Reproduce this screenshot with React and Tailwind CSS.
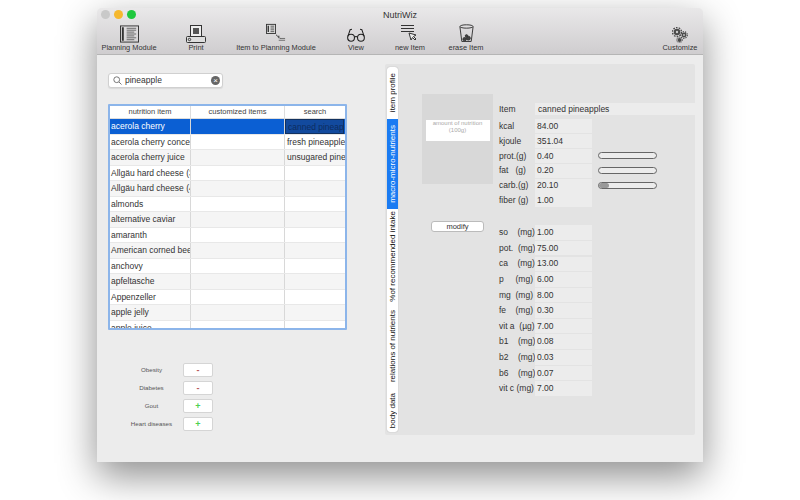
const rows = [
  ["acerola cherry", "canned pineapples"],
  ["acerola cherry concentrate", "fresh pineapple"],
  ["acerola cherry juice", "unsugared pineapple"],
  ["Allgäu hard cheese (30%)", ""],
  ["Allgäu hard cheese (45%)", ""],
  ["almonds", ""],
  ["alternative caviar", ""],
  ["amaranth", ""],
  ["American corned beef", ""],
  ["anchovy", ""],
  ["apfeltasche", ""],
  ["Appenzeller", ""],
  ["apple jelly", ""],
  ["apple juice", ""],
];

const conditions = [
  { label: "Obesity", sign: "-", color: "text-[#b85a5a]" },
  { label: "Diabetes", sign: "-", color: "text-[#b85a5a]" },
  { label: "Gout", sign: "+", color: "text-[#4fd14f]" },
  { label: "Heart diseases", sign: "+", color: "text-[#4fd14f]" },
];

const tabs = [
  { label: "item profile", height: "h-[52px]" },
  { label: "macro-micro-nutrients", height: "h-[90px]", active: true },
  { label: "%of recommended intake", height: "h-[94px]" },
  { label: "relations of nutrients", height: "h-[87px]" },
  { label: "body data", height: "h-[42px]" },
];

const basics = [
  { label: "kcal", value: "84.00" },
  { label: "kjoule", value: "351.04" },
  { label: "prot.(g)", value: "0.40", bar: "w-0" },
  { label: "fat   (g)", value: "0.20", bar: "w-0" },
  { label: "carb.(g)", value: "20.10", bar: "w-[10px]" },
  { label: "fiber (g)", value: "1.00" },
];

const minerals = [
  ["so    (mg)", "1.00"],
  ["pot.  (mg)", "75.00"],
  ["ca    (mg)", "13.00"],
  ["p     (mg)", "6.00"],
  ["mg  (mg)", "8.00"],
  ["fe    (mg)", "0.30"],
  ["vit a  (µg)", "7.00"],
  ["b1    (mg)", "0.08"],
  ["b2    (mg)", "0.03"],
  ["b6    (mg)", "0.07"],
  ["vit c (mg)", "7.00"],
];

const PlanningIcon = () => (
  <svg width="19" height="18" viewBox="0 0 20 18" fill="none" stroke="#333">
    <rect x="0.5" y="0.5" width="19" height="17" strokeWidth="1" />
    <path d="M3 2v14" strokeWidth="2" />
    <path d="M7 3h10M7 5h10M7 7h8M7 9h10M7 11h8M7 13h10M7 15h8" strokeWidth="1" stroke="#666" />
  </svg>
);

const PrintIcon = () => (
  <svg width="20" height="18" viewBox="0 0 20 18">
    <rect x="4.5" y="0.5" width="11" height="11" fill="#eee" stroke="#333" />
    <rect x="7" y="3" width="6" height="6" fill="#555" />
    <rect x="0.5" y="11.5" width="19" height="6" rx="1" fill="#ddd" stroke="#333" />
    <circle cx="3.5" cy="14.5" r="1.2" fill="none" stroke="#333" />
  </svg>
);

const ItemPlanningIcon = () => (
  <svg width="20" height="20" viewBox="0 0 22 20" fill="none" stroke="#333">
    <rect x="0.5" y="0.5" width="10" height="10" fill="#ddd" />
    <path d="M2.5 2v7" strokeWidth="1.5" />
    <path d="M5 2.500h4M5 4.500h4M5 6.500h4M5 8.500h4" stroke="#555" />
    <path d="M11 12l5 4" strokeDasharray="1.5 1" />
    <path d="M12 13l3 0-1 3z" fill="#555" stroke="none" />
    <path d="M14 18h7M15 16h6" stroke="#666" />
  </svg>
);

const GlassesIcon = () => (
  <svg width="18" height="15" viewBox="0 0 20 16" fill="none" stroke="#222" strokeWidth="1.2">
    <circle cx="4.5" cy="10.5" r="3.8" />
    <circle cx="15.5" cy="10.5" r="3.8" />
    <path d="M8.200 10c1-1 2.600-1 3.600 0M1 9l2.500-7.500L5.500 1M19 9L16.500 1.500 14.500 1" />
  </svg>
);

const NewItemIcon = () => (
  <svg width="20" height="19" viewBox="0 0 20 19" fill="none" stroke="#333">
    <path d="M1 1.500h13M1 4.500h13M1 7.500h13" />
    <path d="M9 9l2 7 1.500-2.500L15 16l1-1-2.500-2.500L16 11z" fill="#eee" />
  </svg>
);

const EraseIcon = () => (
  <svg width="15" height="19" viewBox="0 0 16 20" fill="none" stroke="#333">
    <ellipse cx="8" cy="2.500" rx="7" ry="1.800" />
    <path d="M1 3l2 15.500h10L15 3" />
    <circle cx="6" cy="16" r="1.800" fill="#444" />
    <circle cx="10" cy="15" r="2" fill="#444" />
    <circle cx="8" cy="12.500" r="1.300" fill="#444" />
  </svg>
);

const GearsIcon = () => (
  <svg width="16" height="16" viewBox="0 0 16 16" fill="#4a4a4a">
    <circle cx="5" cy="5" r="3.200" />
    <circle cx="5" cy="5" r="4.500" fill="none" stroke="#4a4a4a" strokeWidth="1.400" strokeDasharray="1.600 1.200" />
    <circle cx="5" cy="5" r="1.200" fill="#ccc" />
    <circle cx="12" cy="8" r="2.400" />
    <circle cx="12" cy="8" r="3.300" fill="none" stroke="#4a4a4a" strokeWidth="1.200" strokeDasharray="1.300 1" />
    <circle cx="12" cy="8" r="0.900" fill="#ccc" />
    <circle cx="7.500" cy="13" r="2" />
    <circle cx="7.500" cy="13" r="2.800" fill="none" stroke="#4a4a4a" strokeWidth="1" strokeDasharray="1.100 0.900" />
  </svg>
);

const ToolItem = ({ icon, label, className }) => (
  <div className={`flex flex-col items-center ${className}`}>
    <div className="flex h-[21px] items-end justify-center">{icon}</div>
    <span className="whitespace-nowrap text-[7.4px] leading-[10px] text-[#333]">{label}</span>
  </div>
);

const Meter = ({ bar }) => (
  <div className="ml-[6px] h-[7px] w-[59px] overflow-hidden rounded-full border border-[#666] bg-[#ececec]">
    <div className={`h-full rounded-full bg-[#999] ${bar}`} />
  </div>
);

export default function App() {
  return (
    <div className="h-[500px] w-[800px] overflow-hidden bg-white pl-[97px] pt-2 font-['Liberation_Sans',Arial,sans-serif]">
      <div className="flex h-[454px] w-[606px] flex-col overflow-hidden rounded-t-[5px] bg-[#ececec] shadow-[0_14px_38px_rgba(0,0,0,0.45)]">
        {/* title bar + toolbar */}
        <header className="h-[47px] shrink-0 border-b border-[#b5b5b5] bg-gradient-to-b from-[#e9e8e9] to-[#cfcdcf]">
          <div className="relative flex h-[14px] items-center justify-center">
            <div className="absolute left-[4px] top-[2px] flex gap-[4px]">
              <span className="h-[9px] w-[9px] rounded-full bg-[#c9c9c9]" />
              <span className="h-[9px] w-[9px] rounded-full bg-[#f5b82e]" />
              <span className="h-[9px] w-[9px] rounded-full bg-[#1fc83e]" />
            </div>
            <span className="text-[9px] leading-[12px] text-[#333]">NutriWiz</span>
          </div>
          <div className="flex pl-[3px]">
            <ToolItem icon={<PlanningIcon />} label="Planning Module" className="w-[58px]" />
            <ToolItem icon={<PrintIcon />} label="Print" className="ml-[18px] w-[40px]" />
            <ToolItem icon={<ItemPlanningIcon />} label="Item to Planning Module" className="ml-[15px] w-[90px]" />
            <ToolItem icon={<GlassesIcon />} label="View" className="ml-[20px] w-[30px]" />
            <ToolItem icon={<NewItemIcon />} label="new Item" className="ml-[19px] w-[40px]" />
            <ToolItem icon={<EraseIcon />} label="erase Item" className="ml-[16px] w-[40px]" />
            <ToolItem icon={<GearsIcon />} label="Customize" className="ml-auto mr-[3px] w-[40px]" />
          </div>
        </header>

        <main className="flex flex-1 pt-[9px]">
          {/* left column */}
          <section className="w-[288px] shrink-0 pl-[11px]">
            <div className="mt-[9px] flex h-[15px] w-[115px] items-center rounded-[3px] border border-[#d0d0d0] bg-white pl-[4px] pr-[2px] shadow-[0_1px_1px_rgba(0,0,0,0.08)]">
              <svg width="9" height="9" viewBox="0 0 9 9" fill="none" stroke="#777">
                <circle cx="3.700" cy="3.700" r="2.900" />
                <path d="M6 6l2.500 2.500" />
              </svg>
              <span className="ml-[3px] flex-1 text-[8.5px] leading-none text-[#333]">pineapple</span>
              <span className="flex h-[9px] w-[9px] items-center justify-center rounded-full bg-[#666] text-[8px] leading-none text-white">×</span>
            </div>

            <div className="mt-[16px] h-[226px] w-[239px] overflow-hidden rounded-[1px] border-2 border-[#8cb5ea] bg-white">
              <div className="flex h-[13px] border-b border-[#ddd] text-center text-[7.5px] leading-[12px] text-[#444]">
                <div className="w-[81px] shrink-0 border-r border-[#ddd]">nutrition item</div>
                <div className="w-[94px] shrink-0 border-r border-[#ddd]">customized items</div>
                <div className="flex-1">search</div>
              </div>
              {rows.map(([name, search], i) => {
                const selected = i === 0;
                const stripe = i % 2 === 0 && !selected ? "bg-[#f5f5f5]" : "";
                return (
                  <div
                    key={name}
                    className={`flex h-[15.5px] border-b border-[#e8e8e8] text-[8.5px] leading-[14px] ${selected ? "bg-[#0b5fd3] text-white" : `text-[#333] ${stripe}`}`}
                  >
                    <div className="w-[81px] shrink-0 overflow-hidden whitespace-nowrap border-r border-[#d8d8d8] pl-[1px]">{name}</div>
                    <div className="w-[94px] shrink-0 border-r border-[#d8d8d8]" />
                    <div className={`min-w-0 flex-1 overflow-hidden whitespace-nowrap pl-[2px] ${selected ? "mr-[1px] border border-[#12315f] bg-[#124a9e] text-[#0d2c60]" : ""}`}>
                      {search}
                    </div>
                  </div>
                );
              })}
            </div>

            <div className="mt-[33px] flex flex-col gap-[4px]">
              {conditions.map((c) => (
                <div key={c.label} className="flex h-[14px] items-center">
                  <span className="w-[75px] pl-[12px] text-center text-[6.2px] text-[#555]">{c.label}</span>
                  <span className={`flex h-[14px] w-[30px] items-center justify-center rounded-[2px] border border-[#d5d5d5] bg-white text-[9px] font-bold leading-none ${c.color}`}>
                    {c.sign}
                  </span>
                </div>
              ))}
            </div>
          </section>

          {/* tabs + detail panel */}
          <section className="mb-[27px] mr-[8px] flex flex-1 rounded-[2px] bg-[#e3e3e3]">
            <div className="ml-[2px] mt-[3px] flex h-[365px] w-[11px] shrink-0 flex-col overflow-hidden rounded-[3px] bg-white shadow-[0_0_1px_rgba(0,0,0,0.35)]">
              {tabs.map((t) => (
                <div
                  key={t.label}
                  className={`flex w-full items-center justify-center ${t.height} ${t.active ? "bg-[#1a7bf2] text-white" : "text-[#111]"}`}
                >
                  <span className="rotate-180 whitespace-nowrap text-[8px] leading-none [writing-mode:vertical-rl]">{t.label}</span>
                </div>
              ))}
            </div>

            <div className="flex">
              <div className="ml-[24px] flex w-[71px] shrink-0 flex-col items-center pt-[30px]">
                <div className="flex h-[90px] w-[71px] items-start justify-center bg-[#d8d8d8] pt-[26px]">
                  <div className="h-[21px] w-[64px] bg-white text-center text-[6px] leading-[7px] text-[#aaa]">
                    amount of nutrition<br />(100g)
                  </div>
                </div>
                <button className="mt-[37px] h-[11px] w-[53px] rounded-[3px] border border-[#bbb] bg-white text-[7.5px] leading-[9px] text-[#333]">
                  modify
                </button>
              </div>

              <div className="ml-[6px] w-[196px] pt-[39px] text-[8.5px] text-[#333]">
                <div className="flex h-[12px] items-center">
                  <span className="w-[36px] shrink-0">Item</span>
                  <span className="flex h-full flex-1 items-center bg-[#ececec] pl-[3px]">canned pineapples</span>
                </div>
                <div className="mt-[4px]">
                  {basics.map((b) => (
                    <div key={b.label} className="flex h-[14.8px] items-center">
                      <span className="w-[36px] shrink-0 whitespace-pre">{b.label}</span>
                      <span className="flex h-[14px] w-[57px] items-center bg-[#ececec] pl-[2px]">{b.value}</span>
                      {b.bar && <Meter bar={b.bar} />}
                    </div>
                  ))}
                </div>
                <div className="mt-[17px]">
                  {minerals.map(([label, value]) => (
                    <div key={label} className="flex h-[15.6px] items-center">
                      <span className="w-[36px] shrink-0 whitespace-pre">{label}</span>
                      <span className="flex h-[14.5px] w-[57px] items-center bg-[#ececec] pl-[2px]">{value}</span>
                    </div>
                  ))}
                </div>
              </div>
            </div>
          </section>
        </main>
      </div>
    </div>
  );
}
